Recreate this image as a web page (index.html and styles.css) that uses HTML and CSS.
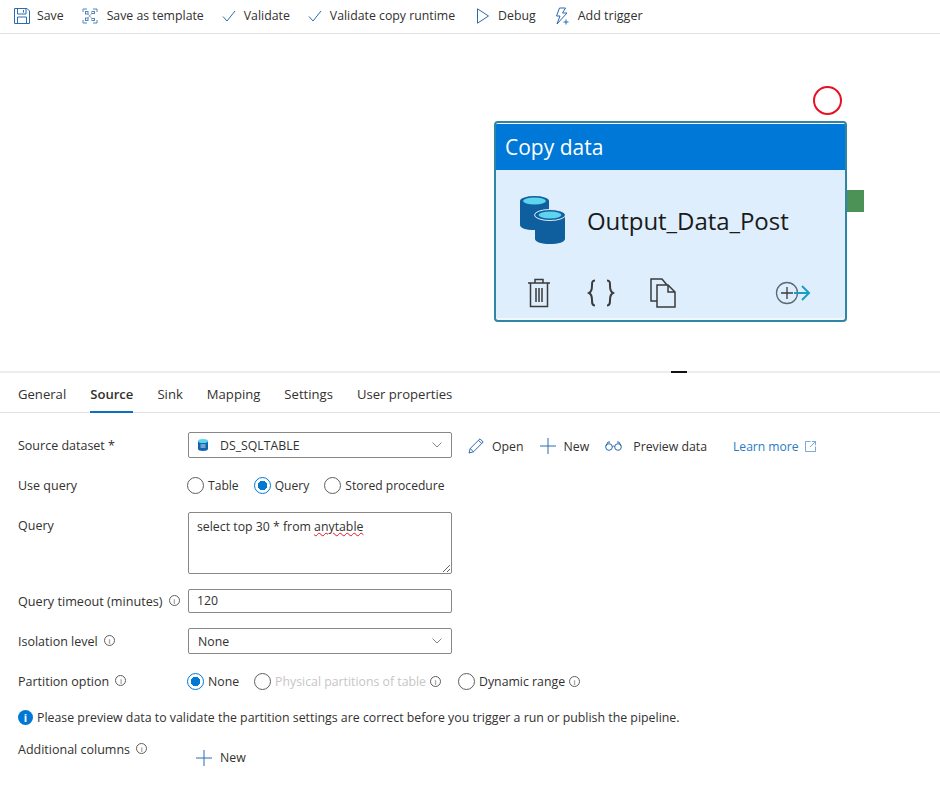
FILE: index.html
```html
<!DOCTYPE html>
<html lang="en">
  <head>
    <meta charset="UTF-8" />
    <title>Copy data - Source</title>
    <link rel="stylesheet" href="styles.css">
  </head>
  <body>
    <!-- Toolbar -->
    <div class="toolbar">
      <a class="tool">
        <svg width="16" height="16" viewBox="0 0 16 16" fill="none" stroke="#2b6cb0"><path d="M.5.5h12.500l2.500 2.500v12.500h-15z"/><path d="M3.500.5v5.500h8.500v-5.500M3.500 15.500v-6.500h9v6.500M9.500 2v2.500"/></svg>
        Save
      </a>
      <a class="tool tool-template">
        <svg width="16" height="16" viewBox="0 0 16 16" fill="none" stroke="#4f86bd"><path d="M5 1H1v3M11 1h4v3M5 15H1v-3M11 15h4v-3"/><rect x="3.500" y="3.500" width="2.500" height="2.500"/><rect x="10" y="3.500" width="2.500" height="2"/><rect x="10" y="10.500" width="2.500" height="2"/><rect x="3.500" y="10" width="2.500" height="2.500"/><path d="M6 6l4 4.500M6 10l4-5" stroke-width=".6"/></svg>
        Save as template
      </a>
      <a class="tool">
        <svg width="14" height="16" viewBox="0 0 14 16" fill="none" stroke="#2b6cb0"><path d="M1 8.500l4 4.500 8-10"/></svg>
        Validate
      </a>
      <a class="tool">
        <svg width="14" height="16" viewBox="0 0 14 16" fill="none" stroke="#2b6cb0"><path d="M1 8.500l4 4.500 8-10"/></svg>
        Validate copy runtime
      </a>
      <a class="tool tool-debug">
        <svg width="14" height="16" viewBox="0 0 14 16" fill="none" stroke="#2b6cb0"><path d="M1.500.8v14.400l11-7.200z"/></svg>
        Debug
      </a>
      <a class="tool tool-trigger">
        <svg width="16" height="18" viewBox="0 0 16 18" fill="none" stroke="#2b6cb0"><path d="M5.500 1h6l-3 5h4.500l-10 11 3-8H2.500z"/><path d="M12 12.500v5M9.500 15h5"/></svg>
        Add trigger
      </a>
    </div>

    <!-- Canvas -->
    <div class="canvas">
      <span class="status-ring"></span>
      <span class="success-port"></span>
      <div class="activity">
        <div class="activity-title">Copy data</div>
        <div class="activity-body">
          <svg width="46" height="50" viewBox="0 0 46 50">
            <path d="M1 6v24c0 3 6 5 14 5s15-2 15-5V6z" fill="#0f5f9e"/>
            <ellipse cx="15.500" cy="6" rx="14.500" ry="5" fill="#0f5f9e"/>
            <ellipse cx="15.500" cy="6" rx="11.500" ry="3.500" fill="#5fd4ee"/>
            <path d="M16 20v24c0 3 7 5 15 5s15-2 15-5V20z" fill="#0f5f9e"/>
            <ellipse cx="31" cy="20" rx="15.500" ry="5.500" fill="#0f5f9e" stroke="#deeefc"/>
            <ellipse cx="31" cy="20" rx="11.500" ry="3.500" fill="#5fd4ee"/>
          </svg>
          <span class="activity-name">Output_Data_Post</span>
        </div>
        <div class="activity-actions">
          <svg width="24" height="30" viewBox="0 0 24 30" fill="none" stroke="#3b3b3b" stroke-width="1.500"><path d="M1 5h22M8 5V1.500h8V5M3.500 5v23.500h17V5M9 10v14M12 10v14M15 10v14"/></svg>
          <svg class="act-code" width="28" height="28" viewBox="0 0 28 28" fill="none" stroke="#3b3b3b" stroke-width="2"><path d="M8 1.500c-3 0-3 2-3 5s0 6-3 7.500c3 1.500 3 4 3 7s0 5.500 3 5.500M20 1.500c3 0 3 2 3 5s0 6 3 7.500c-3 1.500-3 4-3 7s0 5.500-3 5.500"/></svg>
          <svg class="act-copy" width="26" height="30" viewBox="0 0 26 30" fill="none" stroke="#3b3b3b" stroke-width="1.500"><path d="M7 23H1V1h11l5 6M7 7h11l7 7v15H7zM18 7v7h7"/></svg>
          <svg class="act-connect" width="36" height="24" viewBox="0 0 36 24" fill="none"><circle cx="12" cy="12" r="10.500" stroke="#5a6b75" stroke-width="1.300"/><path d="M12 6v12M6 12h12" stroke="#3b3b3b" stroke-width="1.300"/><path d="M19 12h15M27 5l7 7-7 7" stroke="#1b9dc4" stroke-width="2"/></svg>
        </div>
      </div>
    </div>

    <!-- Bottom panel -->
    <div class="panel">
      <span class="panel-grip"></span>
      <div class="tabs">
        <a class="tab">General</a>
        <a class="tab active">Source</a>
        <a class="tab">Sink</a>
        <a class="tab">Mapping</a>
        <a class="tab">Settings</a>
        <a class="tab">User properties</a>
      </div>

      <div class="form">
        <div class="row row-dataset">
          <label class="row-label">Source dataset *</label>
          <div class="select">
            <svg class="sql-icon" width="10" height="12" viewBox="0 0 10 12"><path d="M0 2v8c0 1 2 2 5 2s5-1 5-2V2z" fill="#1265ac"/><ellipse cx="5" cy="2" rx="5" ry="2" fill="#5fd4ee"/><path d="M2.500 6h5M2.500 8h5" stroke="#cfe6f7"/></svg>
            <span class="select-text">DS_SQLTABLE</span>
            <svg class="chevron" width="10" height="6" viewBox="0 0 10 6" fill="none" stroke="#8a8886"><path d="M.5.500L5 5 9.500.500"/></svg>
          </div>
          <a class="cmd cmd-open">
            <svg width="16" height="16" viewBox="0 0 16 16" fill="none" stroke="#2b6cb0"><path d="M1 15l1.200-4.500L12 .8l3.200 3.200-9.700 9.800zM2.200 10.500l3.300 3.300M10.500 2.300l3.200 3.200"/></svg>
            Open
          </a>
          <a class="cmd cmd-new">
            <svg width="16" height="16" viewBox="0 0 16 16" fill="none" stroke="#2b6cb0"><path d="M8 0v16M0 8h16"/></svg>
            New
          </a>
          <a class="cmd cmd-preview">
            <svg width="17" height="10" viewBox="0 0 17 10" fill="none" stroke="#2b6cb0"><circle cx="4" cy="6" r="3.300"/><circle cx="13" cy="6" r="3.300"/><path d="M7.300 5.500c.8-.6 1.600-.6 2.400 0M.8 5L3 1h2M16.200 5L14 1h-2"/></svg>
            Preview data
          </a>
          <a class="learn-more">
            Learn more
            <svg width="11" height="11" viewBox="0 0 12 12" fill="none" stroke="#6a9fd0"><path d="M6 .5H.5v11h11V6M7.500.5h4v4M11.500.5l-6 6"/></svg>
          </a>
        </div>

        <div class="row row-query-type">
          <label class="row-label">Use query</label>
          <label class="radio"><span class="dot"></span>Table</label>
          <label class="radio"><span class="dot on"></span>Query</label>
          <label class="radio"><span class="dot"></span>Stored procedure</label>
        </div>

        <div class="row row-query">
          <label class="row-label">Query</label>
          <div class="query-box">select top 30 * from <span class="misspelt">anytable</span></div>
        </div>

        <div class="row row-timeout">
          <label class="row-label">Query timeout (minutes) <span class="info">i</span></label>
          <div class="textbox">120</div>
        </div>

        <div class="row row-isolation">
          <label class="row-label">Isolation level <span class="info">i</span></label>
          <div class="select">
            <span class="select-text">None</span>
            <svg class="chevron" width="10" height="6" viewBox="0 0 10 6" fill="none" stroke="#8a8886"><path d="M.5.500L5 5 9.500.500"/></svg>
          </div>
        </div>

        <div class="row row-partition">
          <label class="row-label">Partition option <span class="info">i</span></label>
          <label class="radio"><span class="dot on"></span>None</label>
          <label class="radio disabled"><span class="dot"></span>Physical partitions of table <span class="info">i</span></label>
          <label class="radio"><span class="dot"></span>Dynamic range <span class="info">i</span></label>
        </div>

        <div class="notice">
          <span class="notice-icon">i</span>
          Please preview data to validate the partition settings are correct before you trigger a run or publish the pipeline.
        </div>

        <div class="row row-additional">
          <label class="row-label">Additional columns <span class="info">i</span></label>
          <a class="cmd cmd-add">
            <svg width="16" height="16" viewBox="0 0 16 16" fill="none" stroke="#2b6cb0"><path d="M8 0v16M0 8h16"/></svg>
            New
          </a>
        </div>
      </div>
    </div>
  </body>
</html>
```

FILE: styles.css
```css
* {
  margin: 0;
  padding: 0;
  box-sizing: border-box;
}

body {
  font-family: "Open Sans", "Noto Sans", sans-serif;
  font-size: 12.3px;
  color: #323130;
  background: #fff;
  height: 790px;
  overflow: hidden;
}

svg {
  flex: none;
}

/* toolbar */
.toolbar {
  display: flex;
  align-items: center;
  gap: 18px;
  height: 34px;
  padding: 0 0 2px 14px;
  border-bottom: 1px solid #e1e1e1;
}

.tool {
  display: flex;
  align-items: center;
  gap: 8px;
}

.tool:first-child {
  gap: 7px;
}

.tool-template {
  gap: 9px;
}

.tool-debug {
  margin-left: 3px;
}

.tool-trigger {
  font-size: 12.5px;
}

/* canvas */
.canvas {
  position: relative;
  height: 337px;
}

.status-ring {
  position: absolute;
  left: 813px;
  top: 52px;
  width: 29px;
  height: 29px;
  border: 2px solid #e81123;
  border-radius: 50%;
}

.success-port {
  position: absolute;
  left: 847px;
  top: 156px;
  width: 17px;
  height: 22px;
  background: #4c9155;
}

.activity {
  position: absolute;
  left: 494px;
  top: 87px;
  width: 353px;
  height: 201px;
  display: flex;
  flex-direction: column;
  background: linear-gradient(#fff 1px, #deeefc 1px);
  border: 2px solid #2f85a5;
  border-radius: 4px;
  box-shadow: inset 0 -2px 0 #f0f8fe;
  overflow: hidden;
}

.activity-title {
  margin-top: 1px;
  height: 46px;
  padding-left: 9px;
  line-height: 46px;
  font-size: 21px;
  color: #fff;
  background: #0078d7;
}

.activity-body {
  display: flex;
  align-items: center;
  gap: 22px;
  padding: 25px 0 0 23px;
}

.activity-name {
  font-size: 24px;
  letter-spacing: -.05px;
  color: #1a1a1a;
}

.activity-actions {
  display: flex;
  align-items: center;
  margin-top: 33px;
  padding-left: 31px;
}

.act-code {
  margin-left: 36px;
}

.act-copy {
  margin-left: 35px;
}

.act-connect {
  margin-left: 99px;
}

/* panel */
.panel {
  position: relative;
  border-top: 2px solid #ececec;
}

.panel-grip {
  position: absolute;
  left: 671px;
  top: -2px;
  width: 16px;
  height: 2px;
  background: #111;
}

.tabs {
  display: flex;
  gap: 24px;
  height: 40px;
  padding-left: 18px;
  border-bottom: 1px solid #e1e1e1;
}

.tab {
  height: 40px;
  padding-top: 12px;
  line-height: 18px;
  font-size: 13.1px;
}

.tab.active {
  font-weight: 600;
  border-bottom: 2px solid #106ebe;
}

/* form */
.form {
  padding: 19px 0 0 18px;
}

.row {
  display: flex;
  align-items: center;
}

.row-label {
  flex: none;
  width: 170px;
  font-size: 12.5px;
  white-space: nowrap;
}

.row-timeout .row-label {
  font-size: 12.65px;
}

.info {
  display: inline-block;
  width: 11px;
  height: 11px;
  margin-left: 3px;
  border: 1px solid #605e5c;
  border-radius: 50%;
  font-size: 8px;
  line-height: 9px;
  text-align: center;
  vertical-align: 2px;
  color: #605e5c;
}

.select,
.textbox,
.query-box {
  width: 264px;
  border: 1px solid #8a8886;
  border-radius: 2px;
  background: #fff;
}

.select {
  display: flex;
  align-items: center;
  height: 26px;
  padding: 0 9px;
}

.sql-icon {
  margin-right: 12px;
}

.select-text {
  flex: 1;
}

.cmd {
  display: flex;
  align-items: center;
  gap: 8px;
}

.row-dataset .cmd,
.learn-more {
  margin-top: 2px;
}

.cmd-open {
  margin-left: 16px;
}

.cmd-new {
  margin-left: 16px;
}

.cmd-preview {
  margin-left: 16px;
  gap: 11px;
}

.learn-more {
  display: flex;
  align-items: center;
  gap: 6px;
  margin-left: 26px;
  font-size: 12.1px;
  color: #2b7cc4;
}

.row-dataset {
  height: 26px;
}

.row-query-type {
  height: 20px;
  margin-top: 17px;
  font-size: 12.1px;
}

.row-query-type .row-label,
.row-partition .row-label {
  width: 169px;
}

.radio {
  display: flex;
  align-items: center;
  gap: 4px;
  margin-right: 15px;
  white-space: nowrap;
}

.radio.disabled {
  color: #c8c6c4;
  margin-right: 17px;
}

.radio .info {
  margin-left: 0;
}

.dot {
  flex: none;
  width: 17px;
  height: 17px;
  border: 1px solid #605e5c;
  border-radius: 50%;
}

.dot.on {
  border-color: #0078d4;
  background: radial-gradient(circle, #0078d4 0 4.500px, #fff 5px);
}

.row-query {
  align-items: flex-start;
  margin-top: 17px;
}

.query-box {
  height: 62px;
  padding: 5px 8px;
  overflow: auto;
  resize: vertical;
}

.row-query .row-label {
  padding-top: 5px;
}

.misspelt {
  text-decoration: underline wavy #e81123;
  text-decoration-thickness: 1px;
}

.row-timeout {
  margin-top: 15px;
}

.textbox {
  height: 24px;
  padding: 0 8px;
  line-height: 22px;
}

.row-isolation {
  margin-top: 15px;
}

.row-partition {
  height: 20px;
  margin-top: 17px;
}

.notice {
  display: flex;
  align-items: center;
  gap: 4px;
  height: 18px;
  margin-top: 17px;
  font-size: 12.35px;
}

.notice-icon {
  width: 15px;
  height: 15px;
  border-radius: 50%;
  background: #0078d4;
  color: #fff;
  font-size: 11px;
  font-weight: 700;
  line-height: 15px;
  text-align: center;
}

.row-additional {
  align-items: flex-start;
  margin-top: 15px;
}

.cmd-add {
  margin: 8px 0 0 8px;
}
```
